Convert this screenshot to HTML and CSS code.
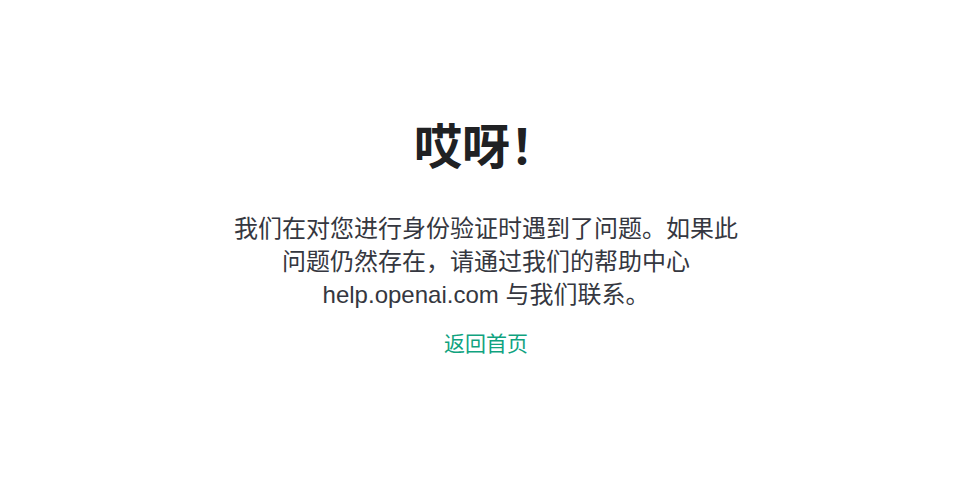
FILE: index.html
```html
<html>
    <head>
        <meta charset="utf-8">
        <link rel="stylesheet" href="styles.css">
    </head>
    <body>
        <main class="page">
            <div class="error">
                <h1 class="error__title">哎呀！</h1>
                <p class="error__text">
                    我们在对您进行身份验证时遇到了问题。如果此问题仍然存在，请通过我们的帮助中心 help.openai.com 与我们联系。
                </p>
                <a class="error__link" href="#">返回首页</a>
            </div>
        </main>
    </body>
</html>
```

FILE: styles.css
```css
* {
    box-sizing: border-box;
}

body {
    margin: 0;
    background-color: #fff;
    color: #353740;
    font-family: "Liberation Sans", "Noto Sans CJK SC", sans-serif;
}

.page {
    display: flex;
    align-items: center;
    justify-content: center;
    height: 100vh;
}

.error {
    display: flex;
    flex-direction: column;
    align-items: center;
    text-align: center;
    width: 520px;
}

.error__title {
    margin: 0 0 36px;
    font-size: 48px;
    line-height: 56px;
    font-weight: 700;
    color: #202123;
}

.error__text {
    margin: 0 0 19px;
    font-size: 24px;
    line-height: 33px;
}

.error__link {
    font-size: 21px;
    line-height: 28px;
    color: #10a37f;
    text-decoration: none;
}
```
